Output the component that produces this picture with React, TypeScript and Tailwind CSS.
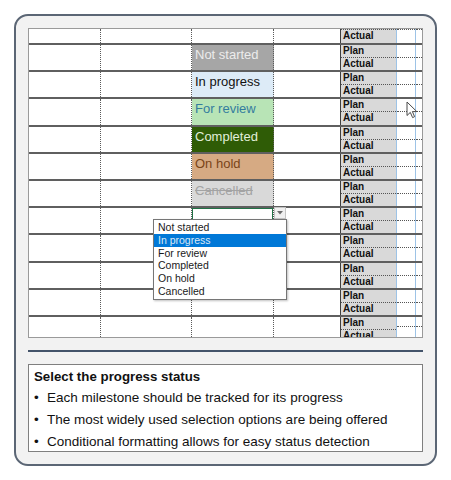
import React from 'react';

type Status = { label: string; bg: string; text: string; strike?: boolean };

const NOT_STARTED: Status = { label: 'Not started', bg: 'bg-[#a6a6a6]', text: 'text-[#ececec]' };
const IN_PROGRESS: Status = { label: 'In progress', bg: 'bg-[#ddebf7]', text: 'text-[#111111]' };
const FOR_REVIEW: Status = { label: 'For review', bg: 'bg-[#b8e4b6]', text: 'text-[#347d9e]' };
const COMPLETED: Status = { label: 'Completed', bg: 'bg-[#2f5c06]', text: 'text-[#e2efda]' };
const ON_HOLD: Status = { label: 'On hold', bg: 'bg-[#d6aa83]', text: 'text-[#7a4418]' };
const CANCELLED: Status = { label: 'Cancelled', bg: 'bg-[#d9d9d9]', text: 'text-[#a3a3a3]', strike: true };

const ROWS: (Status | null)[] = [NOT_STARTED, IN_PROGRESS, FOR_REVIEW, COMPLETED, ON_HOLD, CANCELLED, null, null, null, null];

const OPTIONS = ['Not started', 'In progress', 'For review', 'Completed', 'On hold', 'Cancelled'];

const PlanActual: React.FC<{ onlyActual?: boolean }> = ({ onlyActual }) => (
  <>
    <div className="w-[56px] bg-[#d9d9d9] border-r border-[#9dc3e6] flex flex-col">
      {!onlyActual && (
        <div className="flex-1 border-b border-dotted border-[#555] pl-[2px] text-[10px] font-bold leading-[12px] text-[#111]">Plan</div>
      )}
      <div className={`flex-1 pl-[2px] text-[10px] font-bold leading-[12px] text-[#111] ${onlyActual ? 'border-t border-dotted border-[#555]' : ''}`}>Actual</div>
    </div>
    <div className="w-[19px] border-r border-[#9dc3e6] flex flex-col">
      {!onlyActual && <div className="flex-1 border-b border-dotted border-[#555]" />}
      <div className={`flex-1 ${onlyActual ? 'border-t border-dotted border-[#555]' : ''}`} />
    </div>
    <div className="flex-1 flex flex-col">
      {!onlyActual && <div className="flex-1 border-b border-dotted border-[#555]" />}
      <div className={`flex-1 ${onlyActual ? 'border-t border-dotted border-[#555]' : ''}`} />
    </div>
  </>
);

const Row: React.FC<{ status?: Status | null; selected?: boolean; last?: boolean }> = ({ status, selected, last }) => (
  <div className={`flex border-t-2 border-[#5f5f5f] ${last ? 'h-[22px]' : 'h-[27.2px]'}`}>
    <div className="w-[72px] border-r border-dotted border-[#5a5a5a]" />
    <div className="w-[91px] border-r border-dotted border-[#5a5a5a]" />
    <div className={`w-[82px] border-r border-dotted border-[#5a5a5a] ${status ? status.bg : 'bg-white'}`}>
      {status && (
        <div className={`pl-[3px] pt-[1px] text-[13px] leading-[18px] ${status.text} ${status.strike ? 'line-through' : ''}`}>{status.label}</div>
      )}
      {selected && <div className="h-full border border-[#217346]" />}
    </div>
    <div className="w-[67px] border-r border-[#3f3f3f]" />
    <PlanActual />
  </div>
);

const Sheet: React.FC = () => (
  <div className="relative h-[310px] w-[395px] overflow-hidden border border-[#9a9a9a] bg-white">
    <div className="flex h-[14px]">
      <div className="w-[72px] border-r border-dotted border-[#5a5a5a]" />
      <div className="w-[91px] border-r border-dotted border-[#5a5a5a]" />
      <div className="w-[82px] border-r border-dotted border-[#5a5a5a]" />
      <div className="w-[67px] border-r border-[#3f3f3f]" />
      <PlanActual onlyActual />
    </div>
    {ROWS.map((s, i) => (
      <Row key={i} status={s} selected={i === 6} />
    ))}
    <Row last />

    {/* dropdown button */}
    <div className="absolute left-[245px] top-[178px] flex h-[12px] w-[12px] items-center justify-center border border-[#c4c4c4] bg-[#f0f0f0]">
      <svg width="6" height="4" viewBox="0 0 6 4">
        <path d="M0 0 L6 0 L3 3.5 Z" fill="#6a6a6a" />
      </svg>
    </div>

    {/* list */}
    <div className="absolute left-[124px] top-[190px] w-[134px] border border-[#767676] bg-white py-[1px] shadow-[1px_1px_2px_rgba(0,0,0,0.25)]">
      {OPTIONS.map((o, i) => (
        <div
          key={o}
          className={`h-[12.8px] px-[4px] text-[10.5px] leading-[12.8px] ${i === 1 ? 'bg-[#0078d7] text-[#dce9f6]' : 'text-[#1a1a1a]'}`}
        >
          {o}
        </div>
      ))}
    </div>

    {/* mouse pointer */}
    <svg className="absolute left-[377px] top-[72px]" width="12" height="18" viewBox="0 0 12 18">
      <path d="M1 1 L1 14.5 L4.3 11.4 L6.6 16.6 L8.6 15.7 L6.4 10.6 L10.8 10.6 Z" fill="#ffffff" stroke="#4a4a4a" strokeWidth="1" strokeLinejoin="round" />
    </svg>
  </div>
);

const App: React.FC = () => {
  return (
    <div className="h-[480px] w-[451px] bg-white p-[14px] font-['Liberation_Sans',Arial,sans-serif]">
      <div className="h-[452px] w-[423px] rounded-[14px] border-2 border-[#5b6675] bg-[#f2f2f2] px-[12px] pt-[12px]">
        <Sheet />
        <div className="mt-[12px] h-[1.5px] bg-[#44546a]" />
        <div className="mt-[12px] h-[88px] border border-[#7f7f7f] bg-white px-[5px] pt-[2px] text-[#111]">
          <div className="text-[13.3px] font-bold leading-[20px]">Select the progress status</div>
          <ul className="mt-[1px] space-y-[2px]">
            {[
              'Each milestone should be tracked for its progress',
              'The most widely used selection options are being offered',
              'Conditional formatting allows for easy status detection',
            ].map((t) => (
              <li key={t} className="flex text-[13.5px] leading-[20px]">
                <span className="w-[13px]">•</span>
                <span>{t}</span>
              </li>
            ))}
          </ul>
        </div>
      </div>
    </div>
  );
};

export default App;
